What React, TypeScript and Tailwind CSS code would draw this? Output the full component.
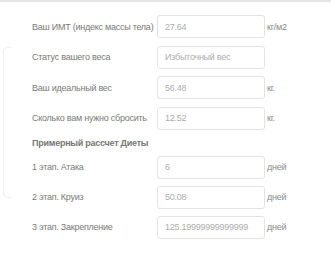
const rows1 = [
  { label: "Ваш ИМТ (индекс массы тела)", value: "27.64", unit: "кг/м2" },
  { label: "Статус вашего веса", value: "Избыточный вес", unit: "" },
  { label: "Ваш идеальный вес", value: "56.48", unit: "кг." },
  { label: "Сколько вам нужно сбросить", value: "12.52", unit: "кг." },
];

const rows2 = [
  { label: "1 этап. Атака", value: "6", unit: "дней" },
  { label: "2 этап. Круиз", value: "50.08", unit: "дней" },
  { label: "3 этап. Закрепление", value: "125.19999999999999", unit: "дней" },
];

function Row({ label, value, unit }: { label: string; value: string; unit: string }) {
  return (
    <div className="flex items-center h-[23px]">
      <span className="w-[125px] shrink-0 text-[#7a7a7a] whitespace-nowrap">{label}</span>
      <div className="w-[108px] h-[23px] shrink-0 border border-[#e3e3e3] rounded-[3px] flex items-center px-[7px] text-[#adadad] overflow-hidden whitespace-nowrap">
        {value}
      </div>
      <span className="ml-[2px] text-[#8a8a8a]">{unit}</span>
    </div>
  );
}

export default function App() {
  return (
    <div
      className="w-[331px] h-[253px] bg-white border-t-[2px] border-[#e6e6e6] overflow-hidden text-[9px] leading-[12px] tracking-[-0.25px]"
      style={{ fontFamily: '"Liberation Sans", Arial, sans-serif' }}
    >
      <div className="flex">
        <div className="ml-[3px] mt-[45px] w-[8px] h-[151px] shrink-0 border-l border-t border-b border-[#efefef] rounded-l-[5px]" />
        <div className="ml-[21px] pt-[13px] flex flex-col">
          <div className="flex flex-col gap-[7.5px]">
            {rows1.map(r => (
              <Row key={r.label} {...r} />
            ))}
          </div>
          <div className="mt-[7px] mb-[7px] h-[12px] font-bold text-[#777]">Примерный рассчет Диеты</div>
          <div className="flex flex-col gap-[7px]">
            {rows2.map(r => (
              <Row key={r.label} {...r} />
            ))}
          </div>
        </div>
      </div>
    </div>
  );
}
